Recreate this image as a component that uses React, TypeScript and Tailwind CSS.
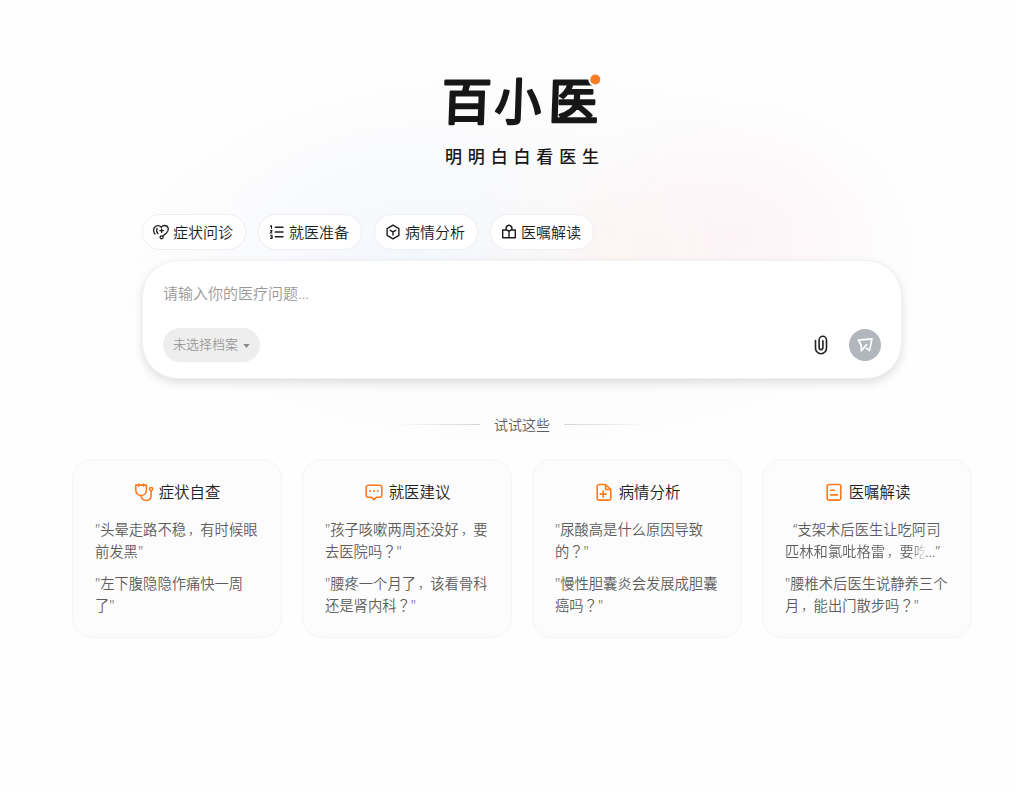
import type { ReactNode } from 'react';

const svgBase = {
  viewBox: '0 0 20 20',
  fill: 'none',
  stroke: 'currentColor',
  strokeLinecap: 'round' as const,
  strokeLinejoin: 'round' as const,
};

const shortcuts: { label: string; icon: ReactNode }[] = [
  {
    label: '症状问诊',
    icon: (
      <svg {...svgBase} viewBox="0 0 16 16" className="size-4" strokeWidth={1.3}>
        <path d="M1.900 10C.2 8.200.2 5 1.700 3.200 2.600 2.200 3.600 1.600 4.800 1.600c1.500 0 2.700.7 3.500 1.600C9.100 2.200 10.300 1.500 11.600 1.500c4 0 4.800 4.700 1.900 7.500L9.900 12" />
        <path d="M4.900 9.500C3.600 8.500 3.700 5.500 4 4.300M8.600 5v3.400M6.900 6.700h3.400" />
        <circle cx="8.600" cy="13.300" r="1.500" />
      </svg>
    ),
  },
  {
    label: '就医准备',
    icon: (
      <svg {...svgBase} viewBox="0 0 16 16" className="size-4" strokeWidth={1.5} strokeLinecap="butt">
        <path d="M5.800 3.200h8.700M5.800 8h8.700M5.800 12.800h8.700" />
        <path d="M1.200 2.400l1.300-.7v3.200M1.100 6.600h2L1.300 9h2M1.100 11.200h2v3.200h-2M1.600 12.800h1.500" strokeWidth={1.1} />
      </svg>
    ),
  },
  {
    label: '病情分析',
    icon: (
      <svg {...svgBase} viewBox="0 0 16 16" className="size-4" strokeWidth={1.4}>
        <path d="M8 1.200l5.900 3.400v6.800L8 14.800l-5.900-3.400V4.600z" />
        <path d="M5.200 6.300L8 7.900l2.800-1.600M8 7.900v3.200" />
      </svg>
    ),
  },
  {
    label: '医嘱解读',
    icon: (
      <svg {...svgBase} viewBox="0 0 16 16" className="size-4" strokeWidth={1.4}>
        <path d="M5.600 6H1.700v7.700h12.600V6h-3.900M8 6.500v7.200M5.900 6a2.800 2.800 0 1 1 4.200 0L8 7.500z" />
      </svg>
    ),
  },
];

interface Topic {
  title: string;
  icon: ReactNode;
  quotes: string[][];
}

const topics: Topic[] = [
  {
    title: '症状自查',
    icon: (
      <svg {...svgBase} className="size-5" strokeWidth={1.6}>
        <path d="M4.800 1v2.200M9.500 1v2.200M9.500 2.100h2.900v5.200c0 3-2.200 5.200-5.300 5.200S1.800 10.300 1.800 7.300V2.100h7.700" />
        <path d="M7.100 12.500c.3 3.200 2.200 5 5 5 3 0 5-2 5-5.200V7.800" />
        <circle cx="17.100" cy="6.100" r="1.600" />
      </svg>
    ),
    quotes: [
      ['"头晕走路不稳，有时候眼', '前发黑"'],
      ['"左下腹隐隐作痛快一周', '了"'],
    ],
  },
  {
    title: '就医建议',
    icon: (
      <svg {...svgBase} className="size-5" strokeWidth={1.6}>
        <path d="M4.200 2.200h11.600a2 2 0 0 1 2 2v8a2 2 0 0 1-2 2h-3.200L10 16.700l-2.600-2.500H4.200a2 2 0 0 1-2-2v-8a2 2 0 0 1 2-2z" />
        <path d="M6.200 8.100h.01M10 8.100h.01M13.800 8.100h.01" strokeWidth={2} />
      </svg>
    ),
    quotes: [
      ['"孩子咳嗽两周还没好，要', '去医院吗？"'],
      ['"腰疼一个月了，该看骨科', '还是肾内科？"'],
    ],
  },
  {
    title: '病情分析',
    icon: (
      <svg {...svgBase} className="size-5" strokeWidth={1.6}>
        <path d="M11.600 1.500H5a1.800 1.800 0 0 0-1.800 1.800v12A1.800 1.800 0 0 0 5 17.100h10a1.800 1.800 0 0 0 1.800-1.800V6.500zM11.600 1.500v5h5.200M9.200 8.100v6M6.200 11.100h6" />
      </svg>
    ),
    quotes: [
      ['"尿酸高是什么原因导致', '的？"'],
      ['"慢性胆囊炎会发展成胆囊', '癌吗？"'],
    ],
  },
  {
    title: '医嘱解读',
    icon: (
      <svg {...svgBase} className="size-5" strokeWidth={1.6}>
        <rect x="3.200" y="1.500" width="13.600" height="15.600" rx="2" />
        <path d="M6.600 7.200h3.800M6.600 11.900h6.800" />
      </svg>
    ),
    quotes: [
      ['“支架术后医生让吃阿司', '匹林和氯吡格雷，要吃'],
      ['"腰椎术后医生说静养三个', '月，能出门散步吗？"'],
    ],
  },
];

function Logo() {
  return (
    <div className="flex flex-col items-center text-[#171717]">
      <svg
        viewBox="0 0 160 60"
        className="h-[60px] w-[160px] overflow-visible font-normal"
        fill="currentColor"
        stroke="currentColor"
        strokeWidth={2.5}
        strokeLinejoin="round"
        fontSize={50}
        textAnchor="middle"
      >
        <text transform="translate(24 48.500) skewX(-2)">百</text>
        <text transform="translate(75.500 48.500) skewX(-2) scale(.93 1)">小</text>
        <text transform="translate(131 48.500) skewX(-2)">医</text>
        <circle cx="153.300" cy="8.500" r="6" fill="#f97c22" stroke="#fdfdfd" strokeWidth={2} />
      </svg>
      <div className="mt-[14px] flex h-6 w-[154px] items-center justify-between text-[17px] leading-6 font-medium">
        {[...'明明白白看医生'].map((char, index) => (
          <span key={index}>{char}</span>
        ))}
      </div>
    </div>
  );
}

// Sets full-width commas and question marks towards the middle of their cell
function Line({ text }: { text: string }) {
  return text.split(/([，？])/).map((part, index) => {
    if (part === '，') {
      return (
        <span key={index} className="inline-block w-[14.300px] pl-[2px] text-[12px] leading-none">
          ，
        </span>
      );
    }
    if (part === '？') {
      return (
        <span key={index} className="font-['Noto_Sans_CJK_JP',sans-serif] leading-none">
          ？
        </span>
      );
    }
    return part;
  });
}

function TopicCard({ title, icon, quotes }: Topic) {
  return (
    <div className="h-[179px] w-[210px] rounded-[20px] border border-[#f5f5f6] bg-[#fcfcfc] px-[22px] pt-[21px]">
      <div className="flex h-6 items-center justify-center gap-[5px] text-[#ff7a1f]">
        {icon}
        <span className="text-[15.400px] leading-6 text-[#222222]">{title}</span>
      </div>
      <div className="mt-[14px] flex flex-col gap-[10px] text-[14.300px] leading-[22px] whitespace-nowrap text-[#5c5c5c]">
        {quotes.map(([first, second]) => {
          const clipped = first.startsWith('“');
          return (
            <p key={first}>
              <span className={clipped ? 'block pl-2' : 'block'}>
                <Line text={first} />
              </span>
              {clipped ? (
                <span className="flex h-[22px]">
                  <span className="h-[22px] w-[140px] overflow-hidden bg-linear-to-r from-[#5c5c5c] from-90% to-[#5c5c5c20] bg-clip-text text-transparent">
                    <Line text={second} />
                  </span>
                  <span>...”</span>
                </span>
              ) : (
                <span className="block h-[22px]">
                  <Line text={second} />
                </span>
              )}
            </p>
          );
        })}
      </div>
    </div>
  );
}

export default function App() {
  return (
    <div className="relative h-[793px] w-full overflow-hidden bg-[#fefefe] font-['Noto_Sans','Noto_Sans_CJK_SC',sans-serif] font-[350]">
      {/* Soft glow behind the composer */}
      <div className="absolute top-[60px] left-[97px] h-[400px] w-[850px] bg-[radial-gradient(ellipse_220px_140px_at_37%_48%,#eef4fc88,transparent),radial-gradient(ellipse_180px_140px_at_75%_44%,#ffe9f066,transparent),radial-gradient(ellipse_170px_120px_at_60%_50%,#fff3ea77,transparent),radial-gradient(closest-side,#fafafc,#fcfcfd_70%,#fefefe00)]" />

      <main className="relative ml-[72px] flex w-[900px] flex-col items-center pt-[71px]">
        <Logo />

        {/* Shortcuts */}
        <div className="mt-[45px] flex w-[760px] gap-3">
          {shortcuts.map(({ label, icon }) => (
            <button
              key={label}
              className="flex h-9 w-[104px] items-center gap-1 rounded-full border border-[#efeff1] bg-white pl-[10px] text-[15px] whitespace-nowrap text-[#1c1c1c]"
            >
              {icon}
              {label}
            </button>
          ))}
        </div>

        {/* Composer */}
        <div className="mt-[10px] flex h-[119px] w-[760px] flex-col justify-between rounded-[36px] border border-[#f1f1f2] bg-white px-5 pt-5 pb-4 shadow-[0_4px_10px_rgba(0,0,0,0.12)]">
          <div className="text-[15px] leading-6 text-[#999999]">请输入你的医疗问题...</div>
          <div className="flex items-center justify-between">
            <button className="flex h-[34px] w-[97px] items-center justify-center gap-[5px] rounded-full bg-[#eeeeee] text-[13px] text-[#9a9a9a]">
              未选择档案
              <svg viewBox="0 0 8 5" className="mt-0.5 h-1 w-[7px]" fill="#888888">
                <path d="M0 0h8L4 5z" />
              </svg>
            </button>
            <div className="flex items-center gap-[18px]">
              <svg {...svgBase} className="size-5 text-[#222222]" strokeWidth={1.6}>
                <path d="M4.500 5.600v7.300a5.500 5.800 0 0 0 11 0V5.200a3.700 3.900 0 0 0-7.400 0v7.400a1.900 2 0 0 0 3.800 0V5.700" />
              </svg>
              <button className="flex size-8 items-center justify-center rounded-full bg-[#b2b6bd]">
                <svg {...svgBase} viewBox="0 0 16 16" className="size-4 text-white" strokeWidth={1.7}>
                  <path d="M4.300 8.300L1.300 3.200 15 1.900 12.400 13.700 9.400 11.200M4.300 8.300V13.700L9.600 7.600M4.300 13.700L7 11" />
                </svg>
              </button>
            </div>
          </div>
        </div>

        {/* Divider */}
        <div className="mt-[34px] flex items-center gap-[14px] text-[14px] leading-6 text-[#606060]">
          <i className="mb-px h-px w-[86px] bg-linear-to-r from-transparent to-[#d2d5d9]" />
          试试这些
          <i className="mb-px h-px w-[86px] bg-linear-to-l from-transparent to-[#d2d5d9]" />
        </div>

        <div className="mt-[22px] flex gap-5">
          {topics.map((topic) => (
            <TopicCard key={topic.title} {...topic} />
          ))}
        </div>
      </main>
    </div>
  );
}
